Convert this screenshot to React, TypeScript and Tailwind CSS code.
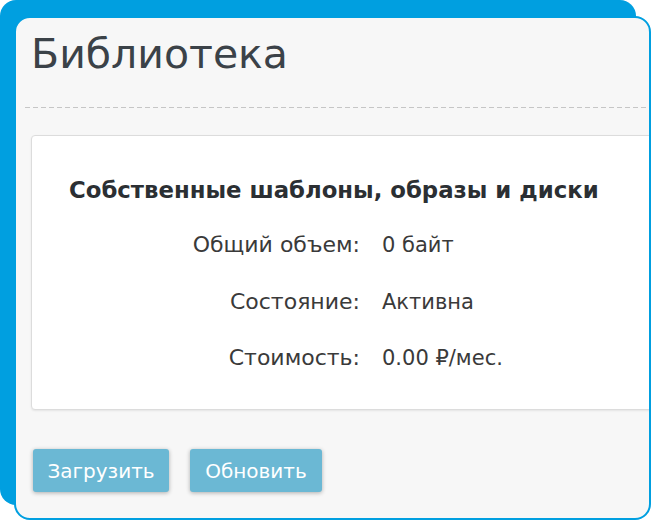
export default function App() {
  const rows = [
    { label: 'Общий объем:', value: '0 байт' },
    { label: 'Состояние:', value: 'Активна' },
    { label: 'Стоимость:', value: '0.00 ₽/мес.' },
  ];

  return (
    <div className="relative h-[520px] w-[651px] overflow-hidden bg-white font-['DejaVu_Sans',sans-serif]">
      {/* blue sheet behind the card */}
      <div className="absolute left-0 top-0 h-[505px] w-[636px] rounded-2xl bg-[#009fe0]" />

      <div className="relative ml-[14px] mt-[16px] h-[504px] w-[637px] overflow-hidden rounded-2xl border-2 border-[#009fe0] bg-[#f7f7f7]">
        <h1 className="pl-[15px] pt-[12px] text-[41px] leading-[48px] text-[#3b4248]">Библиотека</h1>

        <div className="ml-[9px] mt-[29px] h-px bg-[repeating-linear-gradient(to_right,#c6c6c6_0_5px,transparent_5px_8px)]" />

        <div className="ml-[15px] mt-[27px] h-[275px] w-[640px] rounded-[4px] border border-[#dcdcdc] bg-white shadow-[0_1px_2px_rgba(0,0,0,0.08)]">
          <h2 className="pl-[37px] pt-[38px] text-[22.8px] font-bold leading-[32px] text-[#2b2f33]">
            Собственные шаблоны, образы и диски
          </h2>
          <div className="mt-[23px] flex flex-col gap-[24.5px]">
            {rows.map((row) => (
              <div key={row.label} className="flex leading-[32px] text-[#3a3a3a]">
                <span className="w-[328px] text-right text-[22px]">{row.label}</span>
                <span className="pl-[22px] text-[21px]">{row.value}</span>
              </div>
            ))}
          </div>
        </div>

        <div className="ml-[17px] mt-[39px] flex gap-[21px]">
          <button
            type="button"
            className="h-[43px] w-[136px] rounded-[3px] bg-[#6bb8d4] text-[20px] text-white shadow-[0_1px_4px_rgba(0,0,0,0.3)]"
          >
            Загрузить
          </button>
          <button
            type="button"
            className="h-[43px] w-[132px] rounded-[3px] bg-[#6bb8d4] text-[20px] text-white shadow-[0_1px_4px_rgba(0,0,0,0.3)]"
          >
            Обновить
          </button>
        </div>
      </div>
    </div>
  );
}
